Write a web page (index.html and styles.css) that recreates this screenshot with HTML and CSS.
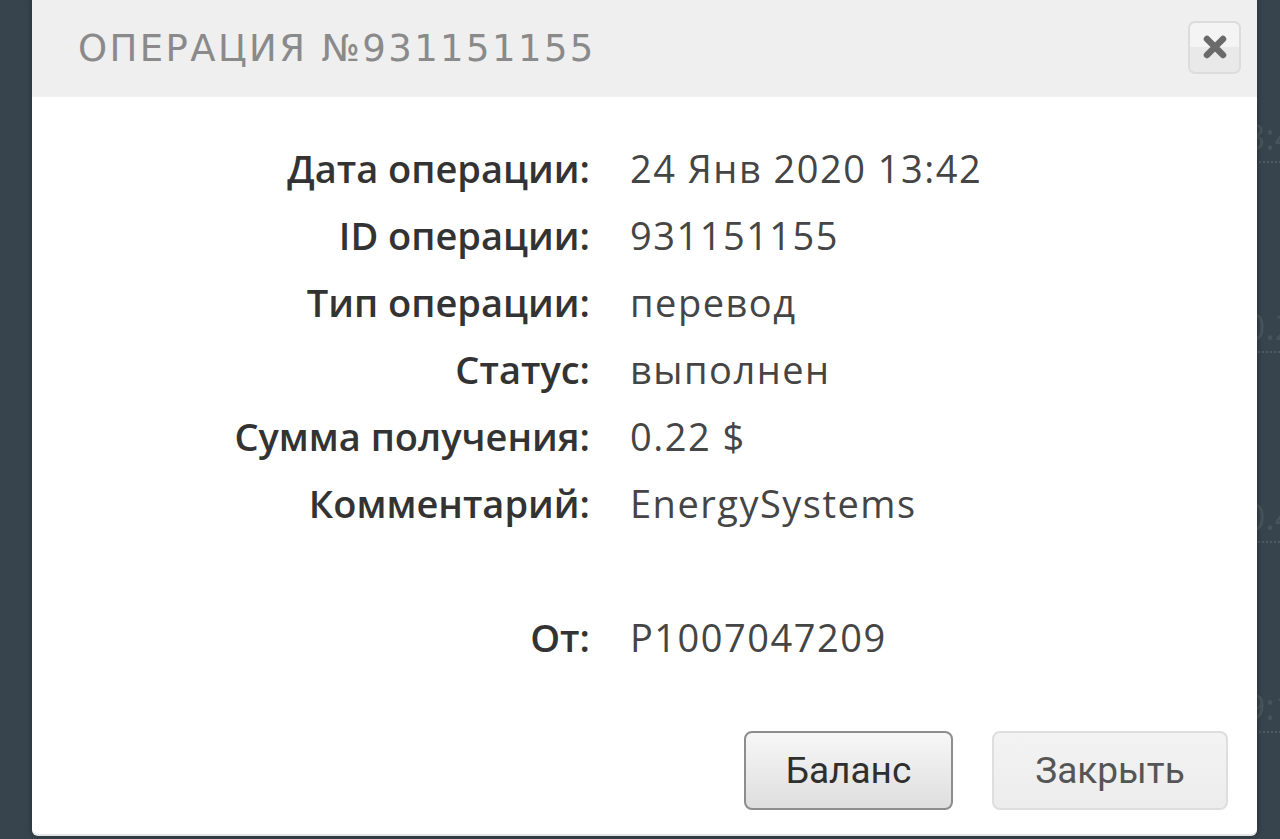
FILE: index.html
```html
<!DOCTYPE html>
<html lang="ru">
<head>
    <meta charset="utf-8">
    <title>Операция №931151155</title>
    <link rel="stylesheet" href="styles.css">
</head>
<body>
    <!-- история операций под модальным окном -->
    <ul class="history">
        <li><span>13:42</span></li>
        <li><span>0.22</span></li>
        <li><span>0.45</span></li>
        <li><span>19:10</span></li>
    </ul>

    <div class="modal">
        <div class="modal-header">
            <h2 class="modal-title">Операция №931151155</h2>
            <button class="modal-close" aria-label="Закрыть">
                <svg width="28" height="28" viewBox="0 0 28 28">
                    <path d="M6 6 L22 22 M22 6 L6 22" stroke="#6a6a6a" stroke-width="6.5" stroke-linecap="round"/>
                </svg>
            </button>
        </div>

        <div class="modal-body">
            <div class="info-label">Дата операции:</div>
            <div class="info-value">24 Янв 2020 13:42</div>

            <div class="info-label">ID операции:</div>
            <div class="info-value">931151155</div>

            <div class="info-label">Тип операции:</div>
            <div class="info-value">перевод</div>

            <div class="info-label">Статус:</div>
            <div class="info-value">выполнен</div>

            <div class="info-label">Сумма получения:</div>
            <div class="info-value">0.22 $</div>

            <div class="info-label">Комментарий:</div>
            <div class="info-value">EnergySystems</div>

            <div class="info-label"></div>
            <div class="info-value"></div>

            <div class="info-label">От:</div>
            <div class="info-value">P1007047209</div>
        </div>

        <div class="modal-footer">
            <button class="btn btn-primary">Баланс</button>
            <button class="btn btn-default">Закрыть</button>
        </div>
    </div>
</body>
</html>
```

FILE: styles.css
```css
body {
  margin: 0;
  height: 839px;
  overflow: hidden;
  background-color: #37444d;
  font-family: "Open Sans", "Liberation Sans", sans-serif;
}

.history {
  list-style: none;
  margin: 0;
  padding: 112px 0 0 0;
}

.history li {
  height: 190px;
  text-align: right;
}

.history span {
  display: inline-block;
  font-size: 36px;
  color: #46545c;
  border-bottom: 2px dotted #4d5b63;
  margin-right: -40px;
  padding: 0 4px;
}

.modal {
  position: absolute;
  left: 32px;
  top: -4px;
  width: 1225px;
  height: 840px;
  background: #fff;
  border-radius: 6px;
  box-shadow: 0 0 6px rgba(0, 0, 0, 0.35);
  border-bottom: 2px solid #e4e4e4;
  box-sizing: border-box;
  overflow: hidden;
}

.modal-header {
  display: flex;
  align-items: center;
  justify-content: space-between;
  height: 101px;
  padding: 4px 16px 0 46px;
  box-sizing: border-box;
  background: #efefef;
}

.modal-title {
  margin: 0;
  font-family: "DejaVu Sans", sans-serif;
  font-weight: normal;
  font-size: 37px;
  letter-spacing: 2.4px;
  text-transform: uppercase;
  color: #8a8a8a;
}

.modal-close {
  width: 53px;
  height: 53px;
  margin-top: -3px;
  display: flex;
  align-items: center;
  justify-content: center;
  padding: 0;
  border: 2px solid #dcdcdc;
  border-radius: 7px;
  background: linear-gradient(#f4f4f4 50%, #e9e9e9 50%);
  cursor: pointer;
}

.modal-body {
  display: grid;
  grid-template-columns: 558px 1fr;
  grid-auto-rows: 67px;
  column-gap: 40px;
  align-items: center;
  padding-top: 37px;
}

.info-label {
  text-align: right;
  font-size: 38px;
  font-weight: 600;
  color: #333;
}

.info-value {
  font-size: 38px;
  letter-spacing: 1.5px;
  color: #454545;
}

.modal-footer {
  display: flex;
  justify-content: flex-end;
  gap: 39px;
  padding: 61px 29px 0 0;
}

.btn {
  height: 79px;
  font-family: Roboto, sans-serif;
  font-size: 37px;
  border-radius: 8px;
  cursor: pointer;
}

.btn-primary {
  width: 209px;
  color: #2f2f2f;
  border: 2px solid #8d8d8d;
  background: linear-gradient(#f7f7f7, #dedede);
}

.btn-default {
  width: 236px;
  color: #555;
  border: 2px solid #dedede;
  background: linear-gradient(#f3f3f3, #ececec);
}
```
